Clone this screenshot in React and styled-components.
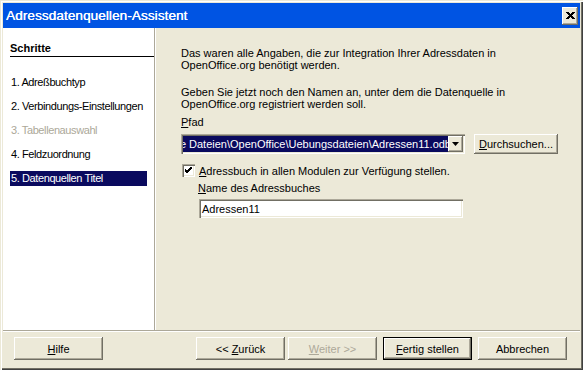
import React from 'react'
import styled, { createGlobalStyle, css } from 'styled-components'

const colors = {
  FACE: '#ECE9D8',
  SHADOW: '#ACA899',
  DARK: '#716F64',
  WHITE: '#FFFFFF',
  TITLE: '#0054E3',
  SELECTED: '#0A0A5E',
  DISABLED: '#ACA899',
}

const GlobalStyle = createGlobalStyle`
  body {
    margin: 0;
    background: ${colors.FACE};
    font-family: "Liberation Sans", Arial, sans-serif;
    font-size: 11px;
  }
`

const bevelOut = css`
  box-shadow: inset -1px -1px ${colors.DARK}, inset 1px 1px ${colors.WHITE}, inset -2px -2px ${colors.SHADOW};
`

const sunken = css`
  box-shadow: inset 1px 1px ${colors.SHADOW}, inset 2px 2px ${colors.DARK}, inset -1px -1px ${colors.WHITE}, inset -2px -2px ${colors.FACE};
`

const Window = styled.div`
  width: 583px;
  height: 370px;
  box-sizing: border-box;
  padding: 3px;
  display: flex;
  flex-direction: column;
  background: ${colors.FACE};
  box-shadow: inset 1px 1px ${colors.FACE}, inset 2px 2px ${colors.WHITE}, inset -1px -1px #404040, inset -2px -2px ${colors.DARK};
`

const TitleBar = styled.div`
  height: 25px;
  flex-shrink: 0;
  display: flex;
  align-items: center;
  justify-content: space-between;
  background: ${colors.TITLE};
  padding: 0 2px 0 3px;
`

const Title = styled.div`
  color: ${colors.WHITE};
  font-size: 13.5px;
  letter-spacing: 0.1px;
  text-shadow: 0.3px 0 ${colors.WHITE};
`

const CloseButton = styled.div`
  width: 16px;
  height: 18px;
  display: flex;
  align-items: center;
  justify-content: center;
  background: ${colors.FACE};
  ${bevelOut}
`

const Main = styled.div`
  flex: 1;
  display: flex;
  border-bottom: 1px solid ${colors.SHADOW};
  box-shadow: 0 1px ${colors.WHITE};
`

const Sidebar = styled.div`
  width: 152px;
  flex-shrink: 0;
  box-sizing: border-box;
  padding: 14px 7px 0 7px;
  background: ${colors.WHITE};
  border-right: 1px solid ${colors.SHADOW};
  white-space: nowrap;
`

const SidebarHeading = styled.div`
  font-weight: bold;
  line-height: 13px;
  padding-bottom: 1px;
  margin-right: -7px;
  border-bottom: 1px solid #000;
  margin-bottom: 18px;
`

const StepList = styled.div`
  display: flex;
  flex-direction: column;
  gap: 9px;
`

const Step = styled.div`
  line-height: 15px;
  padding-left: 1px;
  letter-spacing: -0.4px;
  color: ${p => p.$disabled ? colors.DISABLED : p.$active ? colors.WHITE : '#000'};
  background: ${p => p.$active ? colors.SELECTED : 'transparent'};
`

const Content = styled.div`
  flex: 1;
  padding: 19px 0 0 25px;
  border-left: 1px solid ${colors.WHITE};
  display: flex;
  flex-direction: column;
`

const Paragraph = styled.p`
  margin: 0 0 15px 0;
  line-height: 12px;
`

const Label = styled.div`
  line-height: 12px;
  margin: ${p => p.$indent ? '0 0 5px 17px' : '-9px 0 6px 0'};
`

const Key = styled.span`
  text-decoration: underline;
`

const PathRow = styled.div`
  display: flex;
  align-items: center;
  gap: 9px;
`

const Combo = styled.div`
  width: 284px;
  height: 20px;
  box-sizing: border-box;
  padding: 2px;
  display: flex;
  background: ${colors.WHITE};
  ${sunken}
`

const ComboText = styled.div`
  flex: 1;
  overflow: hidden;
  display: flex;
  justify-content: flex-end;
  align-items: center;
  white-space: nowrap;
  background: ${colors.SELECTED};
  color: ${colors.WHITE};
  margin-right: -3px;
`

const DropButton = styled.div`
  width: 15px;
  flex-shrink: 0;
  display: flex;
  align-items: center;
  justify-content: center;
  background: ${colors.FACE};
  position: relative;
  ${bevelOut}
`

const Button = styled.div`
  box-sizing: border-box;
  width: ${p => p.$width || 89}px;
  height: ${p => p.$height || 23}px;
  flex-shrink: 0;
  display: flex;
  align-items: center;
  justify-content: center;
  white-space: pre;
  background: ${colors.FACE};
  color: ${p => p.$disabled ? colors.DISABLED : '#000'};
  ${p => p.$default
    ? css`
      border: 1px solid #000;
      box-shadow: inset -1px -1px ${colors.DARK}, inset 1px 1px ${colors.WHITE}, inset -2px -2px ${colors.SHADOW};
    `
    : bevelOut}
`

const CheckRow = styled.div`
  display: flex;
  align-items: center;
  gap: 4px;
  margin: 10px 0 5px 1px;
`

const CheckBox = styled.div`
  width: 13px;
  height: 13px;
  box-sizing: border-box;
  display: flex;
  align-items: center;
  justify-content: center;
  background: ${colors.WHITE};
  ${sunken}
`

const NameInput = styled.div`
  width: 264px;
  height: 19px;
  box-sizing: border-box;
  margin-left: 18px;
  padding: 0 3px;
  display: flex;
  align-items: center;
  background: ${colors.WHITE};
  ${sunken}
`

const Footer = styled.div`
  height: 36px;
  flex-shrink: 0;
  padding: 6px 13px 0 11px;
  box-sizing: border-box;
  display: flex;
  align-items: flex-start;
`

const Spacer = styled.div`
  flex: 1;
`

const ButtonGroup = styled.div`
  display: flex;
  gap: ${p => p.$gap || 4}px;
  margin-left: ${p => p.$offset || 0}px;
`

const steps = [
  { label: '1. Adreßbuchtyp' },
  { label: '2. Verbindungs-Einstellungen' },
  { label: '3. Tabellenauswahl', disabled: true },
  { label: '4. Feldzuordnung' },
  { label: '5. Datenquellen Titel', active: true },
]

const App = () => (
  <>
    <GlobalStyle />
    <Window>
      <TitleBar>
        <Title>Adressdatenquellen-Assistent</Title>
        <CloseButton>
          <svg width="9" height="8" viewBox="0 0 9 8">
            <path d="M1 0 L8 7 M0 0 L7 7 M2 0 L9 7 M8 0 L1 7 M7 0 L0 7 M9 0 L2 7" stroke="#000" strokeWidth="1" />
          </svg>
        </CloseButton>
      </TitleBar>
      <Main>
        <Sidebar>
          <SidebarHeading>Schritte</SidebarHeading>
          <StepList>
            { steps.map(s => (
              <Step key={ s.label } $disabled={ s.disabled } $active={ s.active }>{ s.label }</Step>
            )) }
          </StepList>
        </Sidebar>
        <Content>
          <Paragraph>
            Das waren alle Angaben, die zur Integration Ihrer Adressdaten in<br />
            OpenOffice.org benötigt werden.
          </Paragraph>
          <Paragraph>
            Geben Sie jetzt noch den Namen an, unter dem die Datenquelle in<br />
            OpenOffice.org registriert werden soll.
          </Paragraph>
          <Label><Key>P</Key>fad</Label>
          <PathRow>
            <Combo>
              <ComboText>C:\Dokumente und Einstellungen\Benutzer\Eigene Dateien\OpenOffice\Uebungsdateien\Adressen11.odb</ComboText>
              <DropButton>
                <svg width="7" height="4" viewBox="0 0 7 4">
                  <path d="M0 0 H7 L3.5 4 Z" fill="#000" />
                </svg>
              </DropButton>
            </Combo>
            <Button $width={ 84 } $height={ 20 }><span><Key>D</Key>urchsuchen...</span></Button>
          </PathRow>
          <CheckRow>
            <CheckBox>
              <svg width="7" height="7" viewBox="0 0 7 7">
                <path d="M0 2 L2 4 L7 -1 M0 3 L2 5 L7 0 M0 4 L2 6 L7 1" stroke="#000" strokeWidth="1" fill="none" />
              </svg>
            </CheckBox>
            <span><Key>A</Key>dressbuch in allen Modulen zur Verfügung stellen.</span>
          </CheckRow>
          <Label $indent><Key>N</Key>ame des Adressbuches</Label>
          <NameInput>Adressen11</NameInput>
        </Content>
      </Main>
      <Footer>
        <Button><span><Key>H</Key>ilfe</span></Button>
        <Spacer />
        <ButtonGroup $gap={ 3 }>
          <Button><span>&lt;&lt; <Key>Z</Key>urück</span></Button>
          <Button $disabled><span><Key>W</Key>eiter &gt;&gt;</span></Button>
        </ButtonGroup>
        <ButtonGroup $gap={ 6 } $offset={ 6 }>
          <Button $default><span><Key>F</Key>ertig stellen</span></Button>
          <Button><span>Abbrechen</span></Button>
        </ButtonGroup>
      </Footer>
    </Window>
  </>
)

export default App
